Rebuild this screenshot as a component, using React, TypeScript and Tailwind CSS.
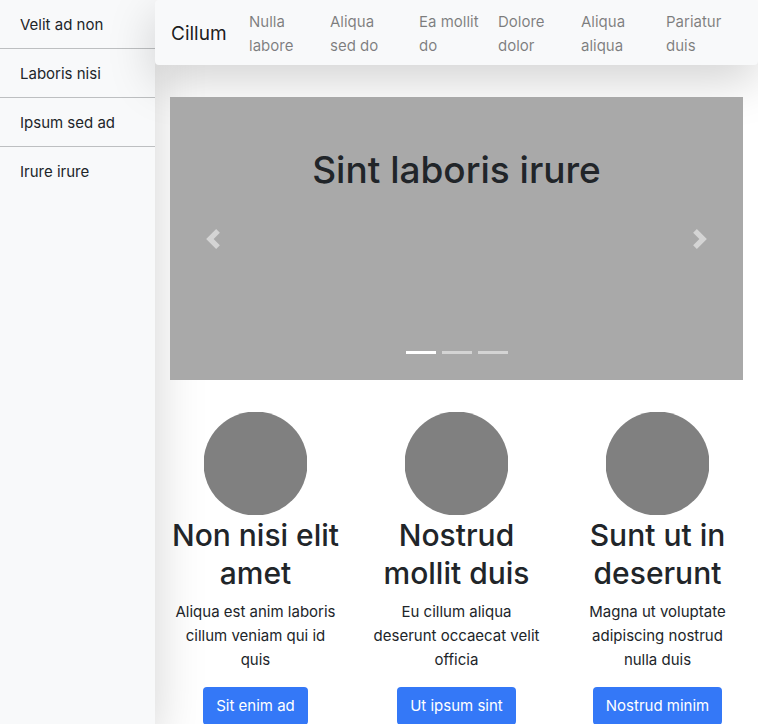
const sideLinks = ["Velit ad non", "Laboris nisi", "Ipsum sed ad", "Irure irure"];

const navLinks = [
  "Nulla labore",
  "Aliqua sed do",
  "Ea mollit do",
  "Dolore dolor",
  "Aliqua aliqua",
  "Pariatur duis",
];

const features = [
  {
    title: "Non nisi elit amet",
    text: "Aliqua est anim laboris cillum veniam qui id quis",
    action: "Sit enim ad",
  },
  {
    title: "Nostrud mollit duis",
    text: "Eu cillum aliqua deserunt occaecat velit officia",
    action: "Ut ipsum sint",
  },
  {
    title: "Sunt ut in deserunt",
    text: "Magna ut voluptate adipiscing nostrud nulla duis",
    action: "Nostrud minim",
  },
];

function Sidebar() {
  return (
    <aside className="w-[155px] shrink-0 bg-[#f8f9fa] shadow-[0_16px_48px_rgba(0,0,0,0.175)]">
      <ul className="divide-y divide-[#bdbfc1]">
        {sideLinks.map((label) => (
          <li key={label}>
            <a href="#" className="block px-5 pt-[13px] pb-[11px]">
              {label}
            </a>
          </li>
        ))}
      </ul>
    </aside>
  );
}

function Navbar() {
  return (
    <nav className="relative flex min-h-[65px] items-center rounded bg-[#f8f9fa] px-4 pt-[10px] pb-[7px] shadow-[0_16px_48px_rgba(0,0,0,0.175)]">
      <a href="#" className="w-[78px] shrink-0 text-[19px] leading-[30px] text-black/90">
        Cillum
      </a>
      <ul className="grid grow grid-cols-[81fr_89fr_79fr_83fr_85fr_76fr]">
        {navLinks.map((label) => (
          <li key={label}>
            <a href="#" className="block pr-4 text-black/50">
              {label}
            </a>
          </li>
        ))}
      </ul>
    </nav>
  );
}

function Carousel() {
  return (
    <section className="relative h-[283px] bg-[#a9a9a9] pt-[49px] text-center">
      <h1 className="text-[37px] leading-[48px] font-medium">Sint laboris irure</h1>
      <button
        type="button"
        aria-label="Previous"
        className="absolute inset-y-0 left-0 flex w-[15%] items-center justify-center opacity-50"
      >
        <svg viewBox="0 0 8 8" className="size-5 fill-white">
          <path d="M5.25 0l-4 4 4 4 1.5-1.5L4.25 4l2.5-2.5L5.25 0z" />
        </svg>
      </button>
      <button
        type="button"
        aria-label="Next"
        className="absolute inset-y-0 right-0 flex w-[15%] items-center justify-center opacity-50"
      >
        <svg viewBox="0 0 8 8" className="size-5 fill-white">
          <path d="M2.75 0l-1.5 1.5L3.75 4l-2.5 2.5L2.75 8l4-4-4-4z" />
        </svg>
      </button>
      <div className="absolute inset-x-0 bottom-[26px] flex justify-center gap-[6px]">
        <button type="button" aria-label="Slide 1" className="h-[3px] w-[30px] bg-white" />
        <button type="button" aria-label="Slide 2" className="h-[3px] w-[30px] bg-white/50" />
        <button type="button" aria-label="Slide 3" className="h-[3px] w-[30px] bg-white/50" />
      </div>
    </section>
  );
}

export default function App() {
  return (
    <div className="flex min-h-screen overflow-hidden bg-white font-['Inter','Liberation_Sans',sans-serif] text-[15px] leading-6 text-[#212529]">
      <Sidebar />
      <div className="min-w-0 grow">
        <Navbar />
        <main className="relative px-[15px] pt-8">
          <Carousel />
          <div className="-mx-[15px] grid grid-cols-3 pt-8">
            {features.map((item) => (
              <article key={item.title} className="flex flex-col items-center px-[15px] text-center">
                <svg viewBox="0 0 103 103" className="size-[103px] fill-[#808080]" aria-hidden="true">
                  <circle cx="51.5" cy="51.5" r="52" />
                </svg>
                <h2 className="mb-2 pt-px text-[30px] leading-[38px] font-medium">{item.title}</h2>
                <p className="mb-[15px] px-0.5">{item.text}</p>
                <button type="button" className="h-[38px] rounded bg-[#3478f7] px-[13px] text-white">
                  {item.action}
                </button>
              </article>
            ))}
          </div>
        </main>
      </div>
    </div>
  );
}
